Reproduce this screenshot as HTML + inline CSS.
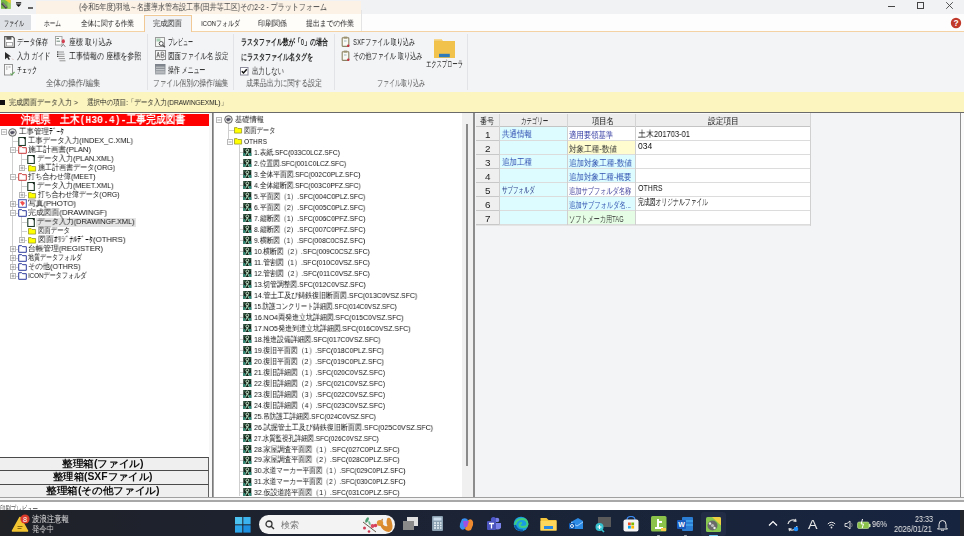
<!DOCTYPE html>
<html><head><meta charset="utf-8">
<style>
*{margin:0;padding:0;box-sizing:border-box}
html,body{width:964px;height:536px;overflow:hidden;background:#f3f4f6;font-family:"Liberation Sans",sans-serif;color:#222}
.a{position:absolute;display:block}
.t{position:absolute;display:block;white-space:nowrap;font-style:normal;transform-origin:0 50%;font-weight:500;will-change:transform}
.clip{position:absolute;overflow:hidden}
</style></head><body>
<div class="a" style="left:0px;top:0px;width:964px;height:14px;background:#f1f2f4;"></div>
<div class="a" style="left:36px;top:1px;width:325px;height:13px;background:#fcf2e6;"></div>
<svg class="a" style="left:0px;top:0px" width="12" height="11" viewBox="0 0 12 11"><rect x="1" y="0" width="9.6" height="8.8" fill="#78b848"/><rect x="7.5" y="0" width="3.1" height="8.8" fill="#9ad060"/><path d="M5 0 h5.6 v3.5z" fill="#f2cc30"/><path d="M2 3.2 L6.8 8.2" stroke="#4a4a4a" stroke-width="2.6"/><path d="M2.8 3.2 L6.6 7.2" stroke="#c8c8c8" stroke-width="0.7"/></svg>
<svg class="a" style="left:15px;top:1px" width="8" height="7" viewBox="0 0 8 7"><rect x="1" y="1.2" width="5.2" height="1.3" fill="#111"/><path d="M1 3.3 L6.2 3.3 L3.6 6 Z" fill="#111"/></svg>
<div class="a" style="left:28px;top:7px;width:5px;height:1.5px;background:#666;"></div>
<i class="t" style="left:79px;top:2.10px;width:248.0px;font-size:9px;line-height:11px;height:11px;color:#4a4a4a;transform:scaleX(0.7823)">(令和5年度)羽地～名護導水管布設工事(田井等工区)その2-2 - プラットフォーム</i>
<div class="a" style="left:888px;top:6px;width:7px;height:1px;background:#444;"></div>
<div class="a" style="left:917px;top:2px;width:7px;height:7px;background:transparent;border:1px solid #444"></div>
<svg class="a" style="left:945px;top:1px" width="9" height="9" viewBox="0 0 9 9"><path d="M1.2 1.2 L7.8 7.8 M7.8 1.2 L1.2 7.8" stroke="#444" stroke-width="0.9"/></svg>
<div class="a" style="left:0px;top:14px;width:964px;height:17px;background:#fdfdfd;"></div>
<div class="a" style="left:36px;top:14px;width:325px;height:17px;background:#fffdfa;"></div>
<div class="a" style="left:0px;top:15px;width:31px;height:15px;background:#dde0e4;"></div>
<div class="a" style="left:361px;top:10px;width:1px;height:21px;background:#e4e4e4;"></div>
<div class="a" style="left:0px;top:31px;width:964px;height:1px;background:#f4d2a4;"></div>
<div class="a" style="left:144px;top:15px;width:48px;height:17px;background:#f3f4f6;border:1px solid #f0c995;border-bottom:none"></div>
<i class="t" style="left:4px;top:19.20px;width:20.0px;font-size:8px;line-height:10px;height:10px;color:#1a1a1a;transform:scaleX(0.625)">ファイル</i>
<i class="t" style="left:44px;top:19.20px;width:17.0px;font-size:8px;line-height:10px;height:10px;color:#1a1a1a;transform:scaleX(0.7083)">ホーム</i>
<i class="t" style="left:81px;top:19.20px;width:53.0px;font-size:8px;line-height:10px;height:10px;color:#1a1a1a;transform:scaleX(0.8281)">全体に関する作業</i>
<i class="t" style="left:153px;top:19.20px;width:29.0px;font-size:8px;line-height:10px;height:10px;color:#1a1a1a;transform:scaleX(0.9063)">完成図面</i>
<i class="t" style="left:201px;top:19.20px;width:39.0px;font-size:8px;line-height:10px;height:10px;color:#1a1a1a;transform:scaleX(0.75)">ICONフォルダ</i>
<i class="t" style="left:258px;top:19.20px;width:29.0px;font-size:8px;line-height:10px;height:10px;color:#1a1a1a;transform:scaleX(0.9063)">印刷関係</i>
<i class="t" style="left:306px;top:19.20px;width:48.0px;font-size:8px;line-height:10px;height:10px;color:#1a1a1a;transform:scaleX(0.8571)">提出までの作業</i>
<svg class="a" style="left:950px;top:17px" width="12" height="12" viewBox="0 0 12 12"><circle cx="6" cy="6" r="5.2" fill="#c0392b"/><text x="6" y="9.2" font-size="8.5" font-weight="bold" text-anchor="middle" fill="#fff" font-family="Liberation Sans">?</text></svg>
<div class="a" style="left:0px;top:32px;width:964px;height:60px;background:#f3f4f6;"></div>
<div class="a" style="left:147px;top:34px;width:1px;height:56px;background:#e2e3e6;"></div>
<div class="a" style="left:233px;top:34px;width:1px;height:56px;background:#e2e3e6;"></div>
<div class="a" style="left:334px;top:34px;width:1px;height:56px;background:#e2e3e6;"></div>
<div class="a" style="left:467px;top:34px;width:1px;height:56px;background:#e2e3e6;"></div>
<svg class="a" style="left:4px;top:36px" width="11" height="12" viewBox="0 0 11 12"><path d="M0.7 0.7h8l1.6 1.6v9h-9.6z" fill="#fff" stroke="#5a5a5a" stroke-width="1.2"/><rect x="2.4" y="0.7" width="5" height="3" fill="#5a5a5a"/><rect x="2.4" y="6.5" width="6" height="3.5" fill="#fff" stroke="#8a8a8a" stroke-width="0.7"/></svg>
<i class="t" style="left:17px;top:36.50px;width:31.0px;font-size:9px;line-height:11px;height:11px;color:#1a1a1a;transform:scaleX(0.6889)">データ保存</i>
<svg class="a" style="left:55px;top:36px" width="12" height="12" viewBox="0 0 12 12"><rect x="0.5" y="0.5" width="6.5" height="8.5" fill="#fafafa" stroke="#a0a0a0" stroke-width="0.9"/><path d="M1.5 2.5h2.5M1.5 5.2h3.5" stroke="#5a7a6a" stroke-width="0.9"/><ellipse cx="8.3" cy="5.3" rx="1.6" ry="2.1" fill="#d04050"/><path d="M6.3 10.8 L8.3 8.3 L10.3 10.8" stroke="#808080" stroke-width="1" fill="none"/></svg>
<i class="t" style="left:69px;top:36.50px;width:43.0px;font-size:9px;line-height:11px;height:11px;color:#1a1a1a;transform:scaleX(0.7609)">座標 取り込み</i>
<svg class="a" style="left:4px;top:51px" width="10" height="10" viewBox="0 0 10 10"><path d="M1 1 L1 8.5 L3 6.5 L4.8 9 L6 8.3 L4.4 5.8 L7.2 5.6 Z" fill="#2a2a2a"/><path d="M8 7.5 L9.5 9" stroke="#c8a0a0" stroke-width="0.7"/></svg>
<i class="t" style="left:17px;top:50.50px;width:33.0px;font-size:9px;line-height:11px;height:11px;color:#1a1a1a;transform:scaleX(0.6945)">入力 ガイド</i>
<svg class="a" style="left:57px;top:51px" width="10" height="12" viewBox="0 0 10 12"><path d="M0 1h7M0 3.2h7.5M0 5.4h7.5M1.5 7.6h6.5M2.5 9.8h6" stroke="#8a8a8a" stroke-width="0.9"/><path d="M0 1h1.2M0 3.2h1.2M0 5.4h1.2" stroke="#333" stroke-width="1.1"/></svg>
<i class="t" style="left:69px;top:50.50px;width:72.0px;font-size:9px;line-height:11px;height:11px;color:#1a1a1a;transform:scaleX(0.7782)">工事情報の 座標を参照</i>
<svg class="a" style="left:4px;top:64px" width="11" height="12" viewBox="0 0 11 12"><rect x="0.5" y="0.5" width="8" height="10.5" fill="#fafafa" stroke="#888" stroke-width="0.9"/><path d="M2 3h1.5M4.5 3h2M2 5h1.5" stroke="#777" stroke-width="0.7"/><path d="M6.5 9.5 L7.8 10.8 L10.5 8" stroke="#6aa860" stroke-width="1.1" fill="none"/></svg>
<i class="t" style="left:17px;top:64.50px;width:20.0px;font-size:9px;line-height:11px;height:11px;color:#1a1a1a;transform:scaleX(0.5556)">チェック</i>
<i class="t" style="left:46px;top:78.00px;width:54.0px;font-size:9px;line-height:11px;height:11px;color:#555;transform:scaleX(0.8242)">全体の操作/編集</i>
<svg class="a" style="left:155px;top:37px" width="11" height="11" viewBox="0 0 11 11"><rect x="0.5" y="0.5" width="9" height="9" fill="#f4f6f4" stroke="#9a9a9a" stroke-width="1"/><rect x="1.5" y="1.5" width="4" height="3" fill="#a8d0b4"/><circle cx="6.2" cy="6.5" r="2" fill="#fff" stroke="#555" stroke-width="1"/><path d="M7.6 8 L10 10.3" stroke="#555" stroke-width="1.3"/></svg>
<i class="t" style="left:168px;top:36.50px;width:25.0px;font-size:9px;line-height:11px;height:11px;color:#1a1a1a;transform:scaleX(0.5556)">プレビュー</i>
<svg class="a" style="left:155px;top:50px" width="11" height="11" viewBox="0 0 11 11"><rect x="0.5" y="0.5" width="10" height="9" fill="#f6f6f6" stroke="#8a8a8a" stroke-width="1"/><path d="M1.8 7.5 L3.2 2.2 L4.6 7.5 M2.4 5.6h1.6" stroke="#666" stroke-width="0.9" fill="none"/><path d="M6.2 2.2v5.3h1.6q1.4 0 1.4-1.4q0-1.2-1.4-1.2h-1.6h1.4q1.2 0 1.2-1.3q0-1.4-1.2-1.4z" stroke="#666" stroke-width="0.8" fill="none"/><circle cx="7.5" cy="9.8" r="0.9" fill="#888"/></svg>
<i class="t" style="left:168px;top:50.50px;width:60.0px;font-size:9px;line-height:11px;height:11px;color:#1a1a1a;transform:scaleX(0.7184)">図面ファイル名 設定</i>
<svg class="a" style="left:155px;top:64px" width="11" height="11" viewBox="0 0 11 11"><defs><linearGradient id="mg" x1="0" y1="0" x2="0" y2="1"><stop offset="0" stop-color="#7a8088"/><stop offset="1" stop-color="#a8acb0"/></linearGradient></defs><rect x="0" y="0" width="10.5" height="10.5" fill="url(#mg)"/><path d="M1 3.2h8.5M1 5.6h8.5M1 8h8.5" stroke="#d8dadc" stroke-width="0.8"/></svg>
<i class="t" style="left:168px;top:64.50px;width:37.0px;font-size:9px;line-height:11px;height:11px;color:#1a1a1a;transform:scaleX(0.6547)">操作 メニュー</i>
<i class="t" style="left:153px;top:77.80px;width:75.0px;font-size:9px;line-height:11px;height:11px;color:#555;transform:scaleX(0.7388)">ファイル個別の操作/編集</i>
<i class="t" style="left:241px;top:36.70px;width:87.0px;font-size:9px;line-height:11px;height:11px;color:#222;font-weight:bold;transform:scaleX(0.664)">ラスタファイル数が「0」の場合</i>
<i class="t" style="left:241px;top:51.50px;width:72.0px;font-size:9px;line-height:11px;height:11px;color:#222;font-weight:bold;transform:scaleX(0.6667)">にラスタファイル名タグを</i>
<svg class="a" style="left:240px;top:67px" width="9" height="9" viewBox="0 0 9 9"><rect x="0.5" y="0.5" width="7.5" height="7.5" fill="#fff" stroke="#8a8a9a" stroke-width="1"/><path d="M1.8 4.2 L3.5 6 L6.8 2.2" stroke="#111" stroke-width="1.5" fill="none"/></svg>
<i class="t" style="left:252px;top:66.30px;width:32.0px;font-size:9px;line-height:11px;height:11px;color:#1a1a1a;transform:scaleX(0.7111)">出力しない</i>
<i class="t" style="left:246px;top:77.90px;width:76.0px;font-size:9px;line-height:11px;height:11px;color:#555;transform:scaleX(0.7677)">成果品出力に関する設定</i>
<svg class="a" style="left:341px;top:36px" width="10" height="12" viewBox="0 0 10 12"><rect x="1.2" y="1.8" width="6.6" height="8.6" rx="0.6" fill="#f8f8f4" stroke="#8a8262" stroke-width="1.1"/><rect x="2.8" y="0.6" width="3.4" height="2" fill="#9a9270"/><path d="M3 5h2.5" stroke="#7a9aa0" stroke-width="0.7"/><circle cx="7.3" cy="9.8" r="1.2" fill="#c83040"/></svg>
<svg class="a" style="left:341px;top:50px" width="10" height="12" viewBox="0 0 10 12"><rect x="1.2" y="1.8" width="6.6" height="8.6" rx="0.6" fill="#f8f8f4" stroke="#8a8262" stroke-width="1.1"/><rect x="2.8" y="0.6" width="3.4" height="2" fill="#9a9270"/><path d="M3 5h2.5" stroke="#7a9aa0" stroke-width="0.7"/><circle cx="7.3" cy="9.8" r="1.2" fill="#c83040"/></svg>
<i class="t" style="left:353px;top:36.90px;width:62.0px;font-size:9px;line-height:11px;height:11px;color:#1a1a1a;transform:scaleX(0.6738)">SXFファイル 取り込み</i>
<i class="t" style="left:353px;top:50.50px;width:69.0px;font-size:9px;line-height:11px;height:11px;color:#1a1a1a;transform:scaleX(0.6797)">その他ファイル 取り込み</i>
<svg class="a" style="left:434px;top:39px" width="21" height="19" viewBox="0 0 21 19"><path d="M0 0.4h7.5l1.5 1.6h12v17h-21z" fill="#f0c04a"/><rect x="0" y="0" width="8" height="1.6" fill="#f6d890"/><rect x="0" y="2.4" width="21" height="16.6" fill="#f2c34c"/><rect x="5" y="14.8" width="10.8" height="3.4" fill="#2f7ab8"/></svg>
<i class="t" style="left:426px;top:59.20px;width:37.0px;font-size:9px;line-height:11px;height:11px;color:#1a1a1a;transform:scaleX(0.5873)">エクスプローラ</i>
<i class="t" style="left:377px;top:78.00px;width:48.0px;font-size:9px;line-height:11px;height:11px;color:#555;transform:scaleX(0.6667)">ファイル取り込み</i>
<div class="a" style="left:0px;top:92px;width:964px;height:20px;background:#fcf5c0;"></div>
<div class="a" style="left:0px;top:112px;width:964px;height:1px;background:#6a6a6a;"></div>
<div class="a" style="left:0px;top:113px;width:964px;height:1px;background:#a8a8a8;"></div>
<div class="a" style="left:0px;top:100px;width:5px;height:5px;background:#111;"></div>
<i class="t" style="left:9px;top:97.60px;width:69.0px;font-size:8px;line-height:10px;height:10px;color:#1a1a1a;transform:scaleX(0.8745)">完成図面データ入力 &gt;</i>
<i class="t" style="left:87px;top:97.60px;width:140.0px;font-size:8px;line-height:10px;height:10px;color:#1a1a1a;transform:scaleX(0.8154)">選択中の項目:「データ入力(DRAWINGEXML)」</i>
<div class="a" style="left:0px;top:113px;width:209px;height:387px;background:#fff;"></div>
<div class="a" style="left:209px;top:113px;width:3px;height:387px;background:#f7f7f7;"></div>
<div class="a" style="left:0px;top:114px;width:209px;height:12px;background:#ff0000;"></div>
<i class="t" style="left:21px;top:114.10px;width:164.0px;font-size:11px;line-height:13px;height:13px;color:#fff;font-family:'Liberation Mono',monospace;font-weight:bold;transform:scaleX(0.8874)">沖縄県　土木(H30.4)-工事完成図書</i>
<div class="a" style="left:12px;top:136px;width:1px;height:140px;background:#cfcfcf;"></div>
<div class="a" style="left:21px;top:153px;width:1px;height:15px;background:#cfcfcf;"></div>
<div class="a" style="left:21px;top:180px;width:1px;height:15px;background:#cfcfcf;"></div>
<div class="a" style="left:21px;top:216px;width:1px;height:24px;background:#cfcfcf;"></div>
<svg class="a" style="left:1px;top:129px" width="6" height="6" viewBox="0 0 6 6"><rect x="0.5" y="0.5" width="5" height="5" fill="#fff" stroke="#b8b8b8" stroke-width="1"/><path d="M1.5 3h3" stroke="#8a8a8a" stroke-width="0.8"/></svg>
<svg class="a" style="left:8px;top:128px" width="9" height="9" viewBox="0 0 9 9"><circle cx="4.5" cy="4.5" r="3.8" fill="#ddd" stroke="#666" stroke-width="1"/><path d="M2 4 Q4.5 2 7 4 Q5 7 3 6" fill="#556"/></svg>
<i class="t" style="left:19px;top:127.10px;width:45.0px;font-size:8px;line-height:10px;height:10px;color:#111;transform:scaleX(0.9375)">工事管理ﾃﾞｰﾀ</i>
<div class="a" style="left:12px;top:141px;width:6px;height:1px;background:#cfcfcf;"></div>
<svg class="a" style="left:18px;top:137px" width="8" height="9" viewBox="0 0 8 9"><rect x="0.8" y="0.5" width="6.5" height="8" fill="#fff" stroke="#1f3d2a" stroke-width="1.1"/><path d="M5 0.5h2.3v2.3z" fill="#111"/></svg>
<i class="t" style="left:28px;top:136.09px;width:105.0px;font-size:8px;line-height:10px;height:10px;color:#111;transform:scaleX(0.9155)">工事データ入力(INDEX_C.XML)</i>
<div class="a" style="left:12px;top:150px;width:6px;height:1px;background:#cfcfcf;"></div>
<svg class="a" style="left:10px;top:147px" width="6" height="6" viewBox="0 0 6 6"><rect x="0.5" y="0.5" width="5" height="5" fill="#fff" stroke="#b8b8b8" stroke-width="1"/><path d="M1.5 3h3" stroke="#8a8a8a" stroke-width="0.8"/></svg>
<svg class="a" style="left:18px;top:145px" width="9" height="9" viewBox="0 0 9 9"><path d="M0.7 1.7h3l1 1h3.6v5.6h-7.6z" fill="#fff" stroke="#c83838" stroke-width="1"/></svg>
<i class="t" style="left:28px;top:145.08px;width:63.0px;font-size:8px;line-height:10px;height:10px;color:#111;transform:scaleX(0.9512)">施工計画書(PLAN)</i>
<div class="a" style="left:21px;top:159px;width:6px;height:1px;background:#cfcfcf;"></div>
<svg class="a" style="left:27px;top:155px" width="8" height="9" viewBox="0 0 8 9"><rect x="0.8" y="0.5" width="6.5" height="8" fill="#fff" stroke="#1f3d2a" stroke-width="1.1"/><path d="M5 0.5h2.3v2.3z" fill="#111"/></svg>
<i class="t" style="left:37px;top:154.07px;width:76.5px;font-size:8px;line-height:10px;height:10px;color:#111;transform:scaleX(0.901)">データ入力(PLAN.XML)</i>
<div class="a" style="left:21px;top:168px;width:6px;height:1px;background:#cfcfcf;"></div>
<svg class="a" style="left:19px;top:165px" width="6" height="6" viewBox="0 0 6 6"><rect x="0.5" y="0.5" width="5" height="5" fill="#fff" stroke="#b8b8b8" stroke-width="1"/><path d="M1.5 3h3" stroke="#8a8a8a" stroke-width="0.8"/><path d="M3 1.5v3" stroke="#8a8a8a" stroke-width="0.8"/></svg>
<svg class="a" style="left:28px;top:163px" width="9" height="9" viewBox="0 0 9 9"><path d="M0.5 2.6h2.6l0.9 0.9h3.6v4.6h-7.1z" fill="#ffff00" stroke="#8a8a20" stroke-width="0.7"/></svg>
<i class="t" style="left:38px;top:163.06px;width:77.0px;font-size:8px;line-height:10px;height:10px;color:#111;transform:scaleX(0.8794)">施工計画書データ(ORG)</i>
<div class="a" style="left:12px;top:177px;width:6px;height:1px;background:#cfcfcf;"></div>
<svg class="a" style="left:10px;top:174px" width="6" height="6" viewBox="0 0 6 6"><rect x="0.5" y="0.5" width="5" height="5" fill="#fff" stroke="#b8b8b8" stroke-width="1"/><path d="M1.5 3h3" stroke="#8a8a8a" stroke-width="0.8"/></svg>
<svg class="a" style="left:18px;top:172px" width="9" height="9" viewBox="0 0 9 9"><path d="M0.7 1.7h3l1 1h3.6v5.6h-7.6z" fill="#fff" stroke="#c83838" stroke-width="1"/></svg>
<i class="t" style="left:28px;top:172.05px;width:67.5px;font-size:8px;line-height:10px;height:10px;color:#111;transform:scaleX(0.8933)">打ち合わせ簿(MEET)</i>
<div class="a" style="left:21px;top:186px;width:6px;height:1px;background:#cfcfcf;"></div>
<svg class="a" style="left:27px;top:182px" width="8" height="9" viewBox="0 0 8 9"><rect x="0.8" y="0.5" width="6.5" height="8" fill="#fff" stroke="#1f3d2a" stroke-width="1.1"/><path d="M5 0.5h2.3v2.3z" fill="#111"/></svg>
<i class="t" style="left:37px;top:181.04px;width:76.5px;font-size:8px;line-height:10px;height:10px;color:#111;transform:scaleX(0.8964)">データ入力(MEET.XML)</i>
<div class="a" style="left:21px;top:195px;width:6px;height:1px;background:#cfcfcf;"></div>
<svg class="a" style="left:19px;top:192px" width="6" height="6" viewBox="0 0 6 6"><rect x="0.5" y="0.5" width="5" height="5" fill="#fff" stroke="#b8b8b8" stroke-width="1"/><path d="M1.5 3h3" stroke="#8a8a8a" stroke-width="0.8"/><path d="M3 1.5v3" stroke="#8a8a8a" stroke-width="0.8"/></svg>
<svg class="a" style="left:28px;top:190px" width="9" height="9" viewBox="0 0 9 9"><path d="M0.5 2.6h2.6l0.9 0.9h3.6v4.6h-7.1z" fill="#ffff00" stroke="#8a8a20" stroke-width="0.7"/></svg>
<i class="t" style="left:38px;top:190.03px;width:81.5px;font-size:8px;line-height:10px;height:10px;color:#111;transform:scaleX(0.8528)">打ち合わせ簿データ(ORG)</i>
<div class="a" style="left:12px;top:204px;width:6px;height:1px;background:#cfcfcf;"></div>
<svg class="a" style="left:10px;top:201px" width="6" height="6" viewBox="0 0 6 6"><rect x="0.5" y="0.5" width="5" height="5" fill="#fff" stroke="#b8b8b8" stroke-width="1"/><path d="M1.5 3h3" stroke="#8a8a8a" stroke-width="0.8"/><path d="M3 1.5v3" stroke="#8a8a8a" stroke-width="0.8"/></svg>
<svg class="a" style="left:18px;top:199px" width="9" height="9" viewBox="0 0 9 9"><rect x="0.7" y="0.7" width="7.6" height="7.6" fill="#fff" stroke="#4050b0" stroke-width="1"/><path d="M2 3 L4.5 2 L7 4 L4.5 7 Z" fill="#f05050"/></svg>
<i class="t" style="left:28px;top:199.02px;width:48.0px;font-size:8px;line-height:10px;height:10px;color:#111;transform:scaleX(0.9669)">写真(PHOTO)</i>
<div class="a" style="left:12px;top:213px;width:6px;height:1px;background:#cfcfcf;"></div>
<svg class="a" style="left:10px;top:210px" width="6" height="6" viewBox="0 0 6 6"><rect x="0.5" y="0.5" width="5" height="5" fill="#fff" stroke="#b8b8b8" stroke-width="1"/><path d="M1.5 3h3" stroke="#8a8a8a" stroke-width="0.8"/></svg>
<svg class="a" style="left:18px;top:208px" width="9" height="9" viewBox="0 0 9 9"><path d="M0.7 1.7h3l1 1h3.6v5.6h-7.6z" fill="#fff" stroke="#2c3a9c" stroke-width="1"/></svg>
<i class="t" style="left:28px;top:208.01px;width:79.0px;font-size:8px;line-height:10px;height:10px;color:#111;transform:scaleX(0.9802)">完成図面(DRAWINGF)</i>
<div class="a" style="left:21px;top:222px;width:6px;height:1px;background:#cfcfcf;"></div>
<div class="a" style="left:36px;top:218px;width:100px;height:9px;background:#e4e4e4;"></div>
<svg class="a" style="left:27px;top:218px" width="8" height="9" viewBox="0 0 8 9"><rect x="0.8" y="0.5" width="6.5" height="8" fill="#fff" stroke="#1f3d2a" stroke-width="1.1"/><path d="M5 0.5h2.3v2.3z" fill="#111"/></svg>
<i class="t" style="left:37px;top:217.00px;width:97.5px;font-size:8px;line-height:10px;height:10px;color:#111;transform:scaleX(0.9166)">データ入力(DRAWINGF.XML)</i>
<div class="a" style="left:21px;top:231px;width:6px;height:1px;background:#cfcfcf;"></div>
<svg class="a" style="left:28px;top:226px" width="9" height="9" viewBox="0 0 9 9"><path d="M0.5 2.6h2.6l0.9 0.9h3.6v4.6h-7.1z" fill="#ffff00" stroke="#8a8a20" stroke-width="0.7"/></svg>
<i class="t" style="left:38px;top:225.99px;width:32.0px;font-size:8px;line-height:10px;height:10px;color:#111;transform:scaleX(0.8)">図面データ</i>
<div class="a" style="left:21px;top:240px;width:6px;height:1px;background:#cfcfcf;"></div>
<svg class="a" style="left:19px;top:237px" width="6" height="6" viewBox="0 0 6 6"><rect x="0.5" y="0.5" width="5" height="5" fill="#fff" stroke="#b8b8b8" stroke-width="1"/><path d="M1.5 3h3" stroke="#8a8a8a" stroke-width="0.8"/><path d="M3 1.5v3" stroke="#8a8a8a" stroke-width="0.8"/></svg>
<svg class="a" style="left:28px;top:235px" width="9" height="9" viewBox="0 0 9 9"><path d="M0.5 2.6h2.6l0.9 0.9h3.6v4.6h-7.1z" fill="#ffff00" stroke="#8a8a20" stroke-width="0.7"/></svg>
<i class="t" style="left:38px;top:234.98px;width:87.5px;font-size:8px;line-height:10px;height:10px;color:#111;transform:scaleX(0.9795)">図面ｵﾘｼﾞﾅﾙﾃﾞｰﾀ(OTHRS)</i>
<div class="a" style="left:12px;top:249px;width:6px;height:1px;background:#cfcfcf;"></div>
<svg class="a" style="left:10px;top:246px" width="6" height="6" viewBox="0 0 6 6"><rect x="0.5" y="0.5" width="5" height="5" fill="#fff" stroke="#b8b8b8" stroke-width="1"/><path d="M1.5 3h3" stroke="#8a8a8a" stroke-width="0.8"/><path d="M3 1.5v3" stroke="#8a8a8a" stroke-width="0.8"/></svg>
<svg class="a" style="left:18px;top:244px" width="9" height="9" viewBox="0 0 9 9"><path d="M0.7 1.7h3l1 1h3.6v5.6h-7.6z" fill="#fff" stroke="#2c3a9c" stroke-width="1"/></svg>
<i class="t" style="left:28px;top:243.97px;width:75.0px;font-size:8px;line-height:10px;height:10px;color:#111;transform:scaleX(0.9587)">台帳管理(REGISTER)</i>
<div class="a" style="left:12px;top:258px;width:6px;height:1px;background:#cfcfcf;"></div>
<svg class="a" style="left:10px;top:255px" width="6" height="6" viewBox="0 0 6 6"><rect x="0.5" y="0.5" width="5" height="5" fill="#fff" stroke="#b8b8b8" stroke-width="1"/><path d="M1.5 3h3" stroke="#8a8a8a" stroke-width="0.8"/><path d="M3 1.5v3" stroke="#8a8a8a" stroke-width="0.8"/></svg>
<svg class="a" style="left:18px;top:253px" width="9" height="9" viewBox="0 0 9 9"><path d="M0.7 1.7h3l1 1h3.6v5.6h-7.6z" fill="#fff" stroke="#2c3a9c" stroke-width="1"/></svg>
<i class="t" style="left:28px;top:252.96px;width:54.0px;font-size:8px;line-height:10px;height:10px;color:#111;transform:scaleX(0.75)">地質データフォルダ</i>
<div class="a" style="left:12px;top:267px;width:6px;height:1px;background:#cfcfcf;"></div>
<svg class="a" style="left:10px;top:264px" width="6" height="6" viewBox="0 0 6 6"><rect x="0.5" y="0.5" width="5" height="5" fill="#fff" stroke="#b8b8b8" stroke-width="1"/><path d="M1.5 3h3" stroke="#8a8a8a" stroke-width="0.8"/><path d="M3 1.5v3" stroke="#8a8a8a" stroke-width="0.8"/></svg>
<svg class="a" style="left:18px;top:262px" width="9" height="9" viewBox="0 0 9 9"><path d="M0.7 1.7h3l1 1h3.6v5.6h-7.6z" fill="#fff" stroke="#2c3a9c" stroke-width="1"/></svg>
<i class="t" style="left:28px;top:261.95px;width:52.5px;font-size:8px;line-height:10px;height:10px;color:#111;transform:scaleX(0.9158)">その他(OTHRS)</i>
<div class="a" style="left:12px;top:276px;width:6px;height:1px;background:#cfcfcf;"></div>
<svg class="a" style="left:10px;top:273px" width="6" height="6" viewBox="0 0 6 6"><rect x="0.5" y="0.5" width="5" height="5" fill="#fff" stroke="#b8b8b8" stroke-width="1"/><path d="M1.5 3h3" stroke="#8a8a8a" stroke-width="0.8"/><path d="M3 1.5v3" stroke="#8a8a8a" stroke-width="0.8"/></svg>
<svg class="a" style="left:18px;top:271px" width="9" height="9" viewBox="0 0 9 9"><path d="M0.7 1.7h3l1 1h3.6v5.6h-7.6z" fill="#fff" stroke="#2c3a9c" stroke-width="1"/></svg>
<i class="t" style="left:28px;top:270.94px;width:58.5px;font-size:8px;line-height:10px;height:10px;color:#111;transform:scaleX(0.7697)">ICONデータフォルダ</i>
<div class="a" style="left:0;top:457px;width:209px;height:14px;background:#efefef;border-top:1px solid #4a4a4a;border-bottom:1px solid #4a4a4a;border-right:1px solid #606060"></div>
<i class="t" style="left:62px;top:458.00px;width:81.5px;font-size:10px;line-height:12px;height:12px;color:#111;font-family:'Liberation Sans',sans-serif;font-weight:bold;transform:scaleX(1.063)">整理箱(ファイル)</i>
<div class="a" style="left:0;top:470px;width:209px;height:14.5px;background:#efefef;border-top:1px solid #4a4a4a;border-bottom:1px solid #4a4a4a;border-right:1px solid #606060"></div>
<i class="t" style="left:52.6px;top:471.25px;width:99.4px;font-size:10px;line-height:12px;height:12px;color:#111;font-family:'Liberation Sans',sans-serif;font-weight:bold;transform:scaleX(1.0342)">整理箱(SXFファイル)</i>
<div class="a" style="left:0;top:483.5px;width:209px;height:14.5px;background:#efefef;border-top:1px solid #4a4a4a;border-bottom:1px solid #4a4a4a;border-right:1px solid #606060"></div>
<i class="t" style="left:45.5px;top:484.75px;width:113.5px;font-size:10px;line-height:12px;height:12px;color:#111;font-family:'Liberation Sans',sans-serif;font-weight:bold;transform:scaleX(1.064)">整理箱(その他ファイル)</i>
<div class="a" style="left:212px;top:113px;width:262px;height:385px;background:#fff;border-left:1px solid #7a7a7a"></div>
<div class="a" style="left:213px;top:113px;width:1px;height:385px;background:#a4a4a4;"></div>
<div class="a" style="left:462px;top:113px;width:11px;height:385px;background:#f0f0f0;"></div>
<div class="a" style="left:466px;top:124px;width:2px;height:342px;background:#8a8a8a;"></div>
<div class="a" style="left:473px;top:113px;width:2px;height:385px;background:#8c8c8c;"></div>
<div class="clip" style="left:214px;top:113px;width:248px;height:384px">
<div class="a" style="left:14px;top:9.5px;width:1px;height:18.939999999999998px;background:#cfcfcf;"></div>
<div class="a" style="left:14px;top:17px;width:6px;height:1px;background:#cfcfcf;"></div>
<div class="a" style="left:14px;top:28px;width:5px;height:1px;background:#cfcfcf;"></div>
<div class="a" style="left:24.5px;top:32.44px;width:1px;height:351.04px;background:#cfcfcf;"></div>
<svg class="a" style="left:2px;top:4px" width="6" height="6" viewBox="0 0 6 6"><rect x="0.5" y="0.5" width="5" height="5" fill="#fff" stroke="#b8b8b8" stroke-width="1"/><path d="M1.5 3h3" stroke="#8a8a8a" stroke-width="0.8"/></svg>
<svg class="a" style="left:10px;top:2px" width="9" height="9" viewBox="0 0 9 9"><circle cx="4.5" cy="4.5" r="3.8" fill="#ddd" stroke="#666" stroke-width="1"/><path d="M2 4 Q4.5 2 7 4 Q5 7 3 6" fill="#556"/></svg>
<i class="t" style="left:21px;top:1.90px;width:29.0px;font-size:8px;line-height:10px;height:10px;color:#111;transform:scaleX(0.9063)">基礎情報</i>
<svg class="a" style="left:19.5px;top:12px" width="9" height="9" viewBox="0 0 9 9"><path d="M0.5 2.6h2.6l0.9 0.9h3.6v4.6h-7.1z" fill="#ffff00" stroke="#8a8a20" stroke-width="0.7"/></svg>
<i class="t" style="left:30.400000000000006px;top:12.87px;width:31.4px;font-size:8px;line-height:10px;height:10px;color:#111;transform:scaleX(0.785)">図面データ</i>
<svg class="a" style="left:12.5px;top:26px" width="6" height="6" viewBox="0 0 6 6"><rect x="0.5" y="0.5" width="5" height="5" fill="#fff" stroke="#b8b8b8" stroke-width="1"/><path d="M1.5 3h3" stroke="#8a8a8a" stroke-width="0.8"/></svg>
<svg class="a" style="left:19.5px;top:23px" width="9" height="9" viewBox="0 0 9 9"><path d="M0.5 2.6h2.6l0.9 0.9h3.6v4.6h-7.1z" fill="#ffff00" stroke="#8a8a20" stroke-width="0.7"/></svg>
<i class="t" style="left:30.400000000000006px;top:23.84px;width:23.0px;font-size:8px;line-height:10px;height:10px;color:#111;transform:scaleX(0.8214)">OTHRS</i>
<div class="a" style="left:25px;top:39px;width:4px;height:1px;background:#cfcfcf;"></div>
<svg class="a" style="left:29px;top:35px" width="9" height="9" viewBox="0 0 9 9"><rect x="0.3" y="0" width="8" height="8" fill="#14281e"/><path d="M0.3 5 h2 v3 h-2z M6 5h2.3v3H6z" fill="#2e8a78"/><circle cx="4.3" cy="2.3" r="1.4" fill="none" stroke="#d8f0d8" stroke-width="0.9"/><path d="M4.3 3.5 L2.6 7.6 M4.3 3.5 L6 7.6" stroke="#b8e0c0" stroke-width="0.9"/><path d="M0.8 1 h1.5 M6.5 1h1.3" stroke="#4a8a60" stroke-width="1"/></svg>
<i class="t" style="left:40.19999999999999px;top:35.31px;width:85.8px;font-size:8px;line-height:10px;height:10px;color:#111;transform:scaleX(0.8319)">1.表紙.SFC(033C0LCZ.SFC)</i>
<div class="a" style="left:25px;top:50px;width:4px;height:1px;background:#cfcfcf;"></div>
<svg class="a" style="left:29px;top:46px" width="9" height="9" viewBox="0 0 9 9"><rect x="0.3" y="0" width="8" height="8" fill="#14281e"/><path d="M0.3 5 h2 v3 h-2z M6 5h2.3v3H6z" fill="#2e8a78"/><circle cx="4.3" cy="2.3" r="1.4" fill="none" stroke="#d8f0d8" stroke-width="0.9"/><path d="M4.3 3.5 L2.6 7.6 M4.3 3.5 L6 7.6" stroke="#b8e0c0" stroke-width="0.9"/><path d="M0.8 1 h1.5 M6.5 1h1.3" stroke="#4a8a60" stroke-width="1"/></svg>
<i class="t" style="left:40.19999999999999px;top:46.28px;width:92.2px;font-size:8px;line-height:10px;height:10px;color:#111;transform:scaleX(0.8296)">2.位置図.SFC(001C0LCZ.SFC)</i>
<div class="a" style="left:25px;top:61px;width:4px;height:1px;background:#cfcfcf;"></div>
<svg class="a" style="left:29px;top:57px" width="9" height="9" viewBox="0 0 9 9"><rect x="0.3" y="0" width="8" height="8" fill="#14281e"/><path d="M0.3 5 h2 v3 h-2z M6 5h2.3v3H6z" fill="#2e8a78"/><circle cx="4.3" cy="2.3" r="1.4" fill="none" stroke="#d8f0d8" stroke-width="0.9"/><path d="M4.3 3.5 L2.6 7.6 M4.3 3.5 L6 7.6" stroke="#b8e0c0" stroke-width="0.9"/><path d="M0.8 1 h1.5 M6.5 1h1.3" stroke="#4a8a60" stroke-width="1"/></svg>
<i class="t" style="left:40.19999999999999px;top:57.25px;width:106.5px;font-size:8px;line-height:10px;height:10px;color:#111;transform:scaleX(0.8405)">3.全体平面図.SFC(002C0PLZ.SFC)</i>
<div class="a" style="left:25px;top:72px;width:4px;height:1px;background:#cfcfcf;"></div>
<svg class="a" style="left:29px;top:68px" width="9" height="9" viewBox="0 0 9 9"><rect x="0.3" y="0" width="8" height="8" fill="#14281e"/><path d="M0.3 5 h2 v3 h-2z M6 5h2.3v3H6z" fill="#2e8a78"/><circle cx="4.3" cy="2.3" r="1.4" fill="none" stroke="#d8f0d8" stroke-width="0.9"/><path d="M4.3 3.5 L2.6 7.6 M4.3 3.5 L6 7.6" stroke="#b8e0c0" stroke-width="0.9"/><path d="M0.8 1 h1.5 M6.5 1h1.3" stroke="#4a8a60" stroke-width="1"/></svg>
<i class="t" style="left:40.19999999999999px;top:68.22px;width:106.5px;font-size:8px;line-height:10px;height:10px;color:#111;transform:scaleX(0.8377)">4.全体縦断図.SFC(003C0PFZ.SFC)</i>
<div class="a" style="left:25px;top:83px;width:4px;height:1px;background:#cfcfcf;"></div>
<svg class="a" style="left:29px;top:79px" width="9" height="9" viewBox="0 0 9 9"><rect x="0.3" y="0" width="8" height="8" fill="#14281e"/><path d="M0.3 5 h2 v3 h-2z M6 5h2.3v3H6z" fill="#2e8a78"/><circle cx="4.3" cy="2.3" r="1.4" fill="none" stroke="#d8f0d8" stroke-width="0.9"/><path d="M4.3 3.5 L2.6 7.6 M4.3 3.5 L6 7.6" stroke="#b8e0c0" stroke-width="0.9"/><path d="M0.8 1 h1.5 M6.5 1h1.3" stroke="#4a8a60" stroke-width="1"/></svg>
<i class="t" style="left:40.19999999999999px;top:79.19px;width:111.3px;font-size:8px;line-height:10px;height:10px;color:#111;transform:scaleX(0.8487)">5.平面図（1）.SFC(004C0PLZ.SFC)</i>
<div class="a" style="left:25px;top:94px;width:4px;height:1px;background:#cfcfcf;"></div>
<svg class="a" style="left:29px;top:90px" width="9" height="9" viewBox="0 0 9 9"><rect x="0.3" y="0" width="8" height="8" fill="#14281e"/><path d="M0.3 5 h2 v3 h-2z M6 5h2.3v3H6z" fill="#2e8a78"/><circle cx="4.3" cy="2.3" r="1.4" fill="none" stroke="#d8f0d8" stroke-width="0.9"/><path d="M4.3 3.5 L2.6 7.6 M4.3 3.5 L6 7.6" stroke="#b8e0c0" stroke-width="0.9"/><path d="M0.8 1 h1.5 M6.5 1h1.3" stroke="#4a8a60" stroke-width="1"/></svg>
<i class="t" style="left:40.19999999999999px;top:90.16px;width:111.3px;font-size:8px;line-height:10px;height:10px;color:#111;transform:scaleX(0.8487)">6.平面図（2）.SFC(005C0PLZ.SFC)</i>
<div class="a" style="left:25px;top:105px;width:4px;height:1px;background:#cfcfcf;"></div>
<svg class="a" style="left:29px;top:101px" width="9" height="9" viewBox="0 0 9 9"><rect x="0.3" y="0" width="8" height="8" fill="#14281e"/><path d="M0.3 5 h2 v3 h-2z M6 5h2.3v3H6z" fill="#2e8a78"/><circle cx="4.3" cy="2.3" r="1.4" fill="none" stroke="#d8f0d8" stroke-width="0.9"/><path d="M4.3 3.5 L2.6 7.6 M4.3 3.5 L6 7.6" stroke="#b8e0c0" stroke-width="0.9"/><path d="M0.8 1 h1.5 M6.5 1h1.3" stroke="#4a8a60" stroke-width="1"/></svg>
<i class="t" style="left:40.19999999999999px;top:101.13px;width:111.3px;font-size:8px;line-height:10px;height:10px;color:#111;transform:scaleX(0.8459)">7.縦断図（1）.SFC(006C0PFZ.SFC)</i>
<div class="a" style="left:25px;top:116px;width:4px;height:1px;background:#cfcfcf;"></div>
<svg class="a" style="left:29px;top:112px" width="9" height="9" viewBox="0 0 9 9"><rect x="0.3" y="0" width="8" height="8" fill="#14281e"/><path d="M0.3 5 h2 v3 h-2z M6 5h2.3v3H6z" fill="#2e8a78"/><circle cx="4.3" cy="2.3" r="1.4" fill="none" stroke="#d8f0d8" stroke-width="0.9"/><path d="M4.3 3.5 L2.6 7.6 M4.3 3.5 L6 7.6" stroke="#b8e0c0" stroke-width="0.9"/><path d="M0.8 1 h1.5 M6.5 1h1.3" stroke="#4a8a60" stroke-width="1"/></svg>
<i class="t" style="left:40.19999999999999px;top:112.10px;width:111.3px;font-size:8px;line-height:10px;height:10px;color:#111;transform:scaleX(0.8459)">8.縦断図（2）.SFC(007C0PFZ.SFC)</i>
<div class="a" style="left:25px;top:127px;width:4px;height:1px;background:#cfcfcf;"></div>
<svg class="a" style="left:29px;top:123px" width="9" height="9" viewBox="0 0 9 9"><rect x="0.3" y="0" width="8" height="8" fill="#14281e"/><path d="M0.3 5 h2 v3 h-2z M6 5h2.3v3H6z" fill="#2e8a78"/><circle cx="4.3" cy="2.3" r="1.4" fill="none" stroke="#d8f0d8" stroke-width="0.9"/><path d="M4.3 3.5 L2.6 7.6 M4.3 3.5 L6 7.6" stroke="#b8e0c0" stroke-width="0.9"/><path d="M0.8 1 h1.5 M6.5 1h1.3" stroke="#4a8a60" stroke-width="1"/></svg>
<i class="t" style="left:40.19999999999999px;top:123.07px;width:111.3px;font-size:8px;line-height:10px;height:10px;color:#111;transform:scaleX(0.8402)">9.横断図（1）.SFC(008C0CSZ.SFC)</i>
<div class="a" style="left:25px;top:138px;width:4px;height:1px;background:#cfcfcf;"></div>
<svg class="a" style="left:29px;top:134px" width="9" height="9" viewBox="0 0 9 9"><rect x="0.3" y="0" width="8" height="8" fill="#14281e"/><path d="M0.3 5 h2 v3 h-2z M6 5h2.3v3H6z" fill="#2e8a78"/><circle cx="4.3" cy="2.3" r="1.4" fill="none" stroke="#d8f0d8" stroke-width="0.9"/><path d="M4.3 3.5 L2.6 7.6 M4.3 3.5 L6 7.6" stroke="#b8e0c0" stroke-width="0.9"/><path d="M0.8 1 h1.5 M6.5 1h1.3" stroke="#4a8a60" stroke-width="1"/></svg>
<i class="t" style="left:40.19999999999999px;top:134.04px;width:115.8px;font-size:8px;line-height:10px;height:10px;color:#111;transform:scaleX(0.8457)">10.横断図（2）.SFC(009C0CSZ.SFC)</i>
<div class="a" style="left:25px;top:149px;width:4px;height:1px;background:#cfcfcf;"></div>
<svg class="a" style="left:29px;top:145px" width="9" height="9" viewBox="0 0 9 9"><rect x="0.3" y="0" width="8" height="8" fill="#14281e"/><path d="M0.3 5 h2 v3 h-2z M6 5h2.3v3H6z" fill="#2e8a78"/><circle cx="4.3" cy="2.3" r="1.4" fill="none" stroke="#d8f0d8" stroke-width="0.9"/><path d="M4.3 3.5 L2.6 7.6 M4.3 3.5 L6 7.6" stroke="#b8e0c0" stroke-width="0.9"/><path d="M0.8 1 h1.5 M6.5 1h1.3" stroke="#4a8a60" stroke-width="1"/></svg>
<i class="t" style="left:40.19999999999999px;top:145.01px;width:115.8px;font-size:8px;line-height:10px;height:10px;color:#111;transform:scaleX(0.8522)">11.管割図（1）.SFC(010C0VSZ.SFC)</i>
<div class="a" style="left:25px;top:160px;width:4px;height:1px;background:#cfcfcf;"></div>
<svg class="a" style="left:29px;top:156px" width="9" height="9" viewBox="0 0 9 9"><rect x="0.3" y="0" width="8" height="8" fill="#14281e"/><path d="M0.3 5 h2 v3 h-2z M6 5h2.3v3H6z" fill="#2e8a78"/><circle cx="4.3" cy="2.3" r="1.4" fill="none" stroke="#d8f0d8" stroke-width="0.9"/><path d="M4.3 3.5 L2.6 7.6 M4.3 3.5 L6 7.6" stroke="#b8e0c0" stroke-width="0.9"/><path d="M0.8 1 h1.5 M6.5 1h1.3" stroke="#4a8a60" stroke-width="1"/></svg>
<i class="t" style="left:40.19999999999999px;top:155.98px;width:115.8px;font-size:8px;line-height:10px;height:10px;color:#111;transform:scaleX(0.8522)">12.管割図（2）.SFC(011C0VSZ.SFC)</i>
<div class="a" style="left:25px;top:171px;width:4px;height:1px;background:#cfcfcf;"></div>
<svg class="a" style="left:29px;top:167px" width="9" height="9" viewBox="0 0 9 9"><rect x="0.3" y="0" width="8" height="8" fill="#14281e"/><path d="M0.3 5 h2 v3 h-2z M6 5h2.3v3H6z" fill="#2e8a78"/><circle cx="4.3" cy="2.3" r="1.4" fill="none" stroke="#d8f0d8" stroke-width="0.9"/><path d="M4.3 3.5 L2.6 7.6 M4.3 3.5 L6 7.6" stroke="#b8e0c0" stroke-width="0.9"/><path d="M0.8 1 h1.5 M6.5 1h1.3" stroke="#4a8a60" stroke-width="1"/></svg>
<i class="t" style="left:40.19999999999999px;top:166.95px;width:111.8px;font-size:8px;line-height:10px;height:10px;color:#111;transform:scaleX(0.8468)">13.切管調整図.SFC(012C0VSZ.SFC)</i>
<div class="a" style="left:25px;top:182px;width:4px;height:1px;background:#cfcfcf;"></div>
<svg class="a" style="left:29px;top:178px" width="9" height="9" viewBox="0 0 9 9"><rect x="0.3" y="0" width="8" height="8" fill="#14281e"/><path d="M0.3 5 h2 v3 h-2z M6 5h2.3v3H6z" fill="#2e8a78"/><circle cx="4.3" cy="2.3" r="1.4" fill="none" stroke="#d8f0d8" stroke-width="0.9"/><path d="M4.3 3.5 L2.6 7.6 M4.3 3.5 L6 7.6" stroke="#b8e0c0" stroke-width="0.9"/><path d="M0.8 1 h1.5 M6.5 1h1.3" stroke="#4a8a60" stroke-width="1"/></svg>
<i class="t" style="left:40.19999999999999px;top:177.92px;width:163.3px;font-size:8px;line-height:10px;height:10px;color:#111;transform:scaleX(0.8685)">14.管土工及び鋳鉄復旧断面図.SFC(013C0VSZ.SFC)</i>
<div class="a" style="left:25px;top:193px;width:4px;height:1px;background:#cfcfcf;"></div>
<svg class="a" style="left:29px;top:189px" width="9" height="9" viewBox="0 0 9 9"><rect x="0.3" y="0" width="8" height="8" fill="#14281e"/><path d="M0.3 5 h2 v3 h-2z M6 5h2.3v3H6z" fill="#2e8a78"/><circle cx="4.3" cy="2.3" r="1.4" fill="none" stroke="#d8f0d8" stroke-width="0.9"/><path d="M4.3 3.5 L2.6 7.6 M4.3 3.5 L6 7.6" stroke="#b8e0c0" stroke-width="0.9"/><path d="M0.8 1 h1.5 M6.5 1h1.3" stroke="#4a8a60" stroke-width="1"/></svg>
<i class="t" style="left:40.19999999999999px;top:188.89px;width:142.8px;font-size:8px;line-height:10px;height:10px;color:#111;transform:scaleX(0.7932)">15.防護コンクリート詳細図.SFC(014C0VSZ.SFC)</i>
<div class="a" style="left:25px;top:204px;width:4px;height:1px;background:#cfcfcf;"></div>
<svg class="a" style="left:29px;top:200px" width="9" height="9" viewBox="0 0 9 9"><rect x="0.3" y="0" width="8" height="8" fill="#14281e"/><path d="M0.3 5 h2 v3 h-2z M6 5h2.3v3H6z" fill="#2e8a78"/><circle cx="4.3" cy="2.3" r="1.4" fill="none" stroke="#d8f0d8" stroke-width="0.9"/><path d="M4.3 3.5 L2.6 7.6 M4.3 3.5 L6 7.6" stroke="#b8e0c0" stroke-width="0.9"/><path d="M0.8 1 h1.5 M6.5 1h1.3" stroke="#4a8a60" stroke-width="1"/></svg>
<i class="t" style="left:40.19999999999999px;top:199.86px;width:149.6px;font-size:8px;line-height:10px;height:10px;color:#111;transform:scaleX(0.8673)">16.NO4両発進立坑詳細図.SFC(015C0VSZ.SFC)</i>
<div class="a" style="left:25px;top:215px;width:4px;height:1px;background:#cfcfcf;"></div>
<svg class="a" style="left:29px;top:211px" width="9" height="9" viewBox="0 0 9 9"><rect x="0.3" y="0" width="8" height="8" fill="#14281e"/><path d="M0.3 5 h2 v3 h-2z M6 5h2.3v3H6z" fill="#2e8a78"/><circle cx="4.3" cy="2.3" r="1.4" fill="none" stroke="#d8f0d8" stroke-width="0.9"/><path d="M4.3 3.5 L2.6 7.6 M4.3 3.5 L6 7.6" stroke="#b8e0c0" stroke-width="0.9"/><path d="M0.8 1 h1.5 M6.5 1h1.3" stroke="#4a8a60" stroke-width="1"/></svg>
<i class="t" style="left:40.19999999999999px;top:210.83px;width:156.6px;font-size:8px;line-height:10px;height:10px;color:#111;transform:scaleX(0.8677)">17.NO5発進到達立坑詳細図.SFC(016C0VSZ.SFC)</i>
<div class="a" style="left:25px;top:226px;width:4px;height:1px;background:#cfcfcf;"></div>
<svg class="a" style="left:29px;top:222px" width="9" height="9" viewBox="0 0 9 9"><rect x="0.3" y="0" width="8" height="8" fill="#14281e"/><path d="M0.3 5 h2 v3 h-2z M6 5h2.3v3H6z" fill="#2e8a78"/><circle cx="4.3" cy="2.3" r="1.4" fill="none" stroke="#d8f0d8" stroke-width="0.9"/><path d="M4.3 3.5 L2.6 7.6 M4.3 3.5 L6 7.6" stroke="#b8e0c0" stroke-width="0.9"/><path d="M0.8 1 h1.5 M6.5 1h1.3" stroke="#4a8a60" stroke-width="1"/></svg>
<i class="t" style="left:40.19999999999999px;top:221.80px;width:126.4px;font-size:8px;line-height:10px;height:10px;color:#111;transform:scaleX(0.8539)">18.推進設備詳細図.SFC(017C0VSZ.SFC)</i>
<div class="a" style="left:25px;top:237px;width:4px;height:1px;background:#cfcfcf;"></div>
<svg class="a" style="left:29px;top:233px" width="9" height="9" viewBox="0 0 9 9"><rect x="0.3" y="0" width="8" height="8" fill="#14281e"/><path d="M0.3 5 h2 v3 h-2z M6 5h2.3v3H6z" fill="#2e8a78"/><circle cx="4.3" cy="2.3" r="1.4" fill="none" stroke="#d8f0d8" stroke-width="0.9"/><path d="M4.3 3.5 L2.6 7.6 M4.3 3.5 L6 7.6" stroke="#b8e0c0" stroke-width="0.9"/><path d="M0.8 1 h1.5 M6.5 1h1.3" stroke="#4a8a60" stroke-width="1"/></svg>
<i class="t" style="left:40.19999999999999px;top:232.77px;width:129.8px;font-size:8px;line-height:10px;height:10px;color:#111;transform:scaleX(0.8562)">19.復旧平面図（1）.SFC(018C0PLZ.SFC)</i>
<div class="a" style="left:25px;top:248px;width:4px;height:1px;background:#cfcfcf;"></div>
<svg class="a" style="left:29px;top:244px" width="9" height="9" viewBox="0 0 9 9"><rect x="0.3" y="0" width="8" height="8" fill="#14281e"/><path d="M0.3 5 h2 v3 h-2z M6 5h2.3v3H6z" fill="#2e8a78"/><circle cx="4.3" cy="2.3" r="1.4" fill="none" stroke="#d8f0d8" stroke-width="0.9"/><path d="M4.3 3.5 L2.6 7.6 M4.3 3.5 L6 7.6" stroke="#b8e0c0" stroke-width="0.9"/><path d="M0.8 1 h1.5 M6.5 1h1.3" stroke="#4a8a60" stroke-width="1"/></svg>
<i class="t" style="left:40.19999999999999px;top:243.74px;width:129.8px;font-size:8px;line-height:10px;height:10px;color:#111;transform:scaleX(0.8562)">20.復旧平面図（2）.SFC(019C0PLZ.SFC)</i>
<div class="a" style="left:25px;top:259px;width:4px;height:1px;background:#cfcfcf;"></div>
<svg class="a" style="left:29px;top:255px" width="9" height="9" viewBox="0 0 9 9"><rect x="0.3" y="0" width="8" height="8" fill="#14281e"/><path d="M0.3 5 h2 v3 h-2z M6 5h2.3v3H6z" fill="#2e8a78"/><circle cx="4.3" cy="2.3" r="1.4" fill="none" stroke="#d8f0d8" stroke-width="0.9"/><path d="M4.3 3.5 L2.6 7.6 M4.3 3.5 L6 7.6" stroke="#b8e0c0" stroke-width="0.9"/><path d="M0.8 1 h1.5 M6.5 1h1.3" stroke="#4a8a60" stroke-width="1"/></svg>
<i class="t" style="left:40.19999999999999px;top:254.71px;width:131.1px;font-size:8px;line-height:10px;height:10px;color:#111;transform:scaleX(0.8598)">21.復旧詳細図（1）.SFC(020C0VSZ.SFC)</i>
<div class="a" style="left:25px;top:270px;width:4px;height:1px;background:#cfcfcf;"></div>
<svg class="a" style="left:29px;top:266px" width="9" height="9" viewBox="0 0 9 9"><rect x="0.3" y="0" width="8" height="8" fill="#14281e"/><path d="M0.3 5 h2 v3 h-2z M6 5h2.3v3H6z" fill="#2e8a78"/><circle cx="4.3" cy="2.3" r="1.4" fill="none" stroke="#d8f0d8" stroke-width="0.9"/><path d="M4.3 3.5 L2.6 7.6 M4.3 3.5 L6 7.6" stroke="#b8e0c0" stroke-width="0.9"/><path d="M0.8 1 h1.5 M6.5 1h1.3" stroke="#4a8a60" stroke-width="1"/></svg>
<i class="t" style="left:40.19999999999999px;top:265.68px;width:131.1px;font-size:8px;line-height:10px;height:10px;color:#111;transform:scaleX(0.8598)">22.復旧詳細図（2）.SFC(021C0VSZ.SFC)</i>
<div class="a" style="left:25px;top:281px;width:4px;height:1px;background:#cfcfcf;"></div>
<svg class="a" style="left:29px;top:277px" width="9" height="9" viewBox="0 0 9 9"><rect x="0.3" y="0" width="8" height="8" fill="#14281e"/><path d="M0.3 5 h2 v3 h-2z M6 5h2.3v3H6z" fill="#2e8a78"/><circle cx="4.3" cy="2.3" r="1.4" fill="none" stroke="#d8f0d8" stroke-width="0.9"/><path d="M4.3 3.5 L2.6 7.6 M4.3 3.5 L6 7.6" stroke="#b8e0c0" stroke-width="0.9"/><path d="M0.8 1 h1.5 M6.5 1h1.3" stroke="#4a8a60" stroke-width="1"/></svg>
<i class="t" style="left:40.19999999999999px;top:276.65px;width:131.1px;font-size:8px;line-height:10px;height:10px;color:#111;transform:scaleX(0.8598)">23.復旧詳細図（3）.SFC(022C0VSZ.SFC)</i>
<div class="a" style="left:25px;top:292px;width:4px;height:1px;background:#cfcfcf;"></div>
<svg class="a" style="left:29px;top:288px" width="9" height="9" viewBox="0 0 9 9"><rect x="0.3" y="0" width="8" height="8" fill="#14281e"/><path d="M0.3 5 h2 v3 h-2z M6 5h2.3v3H6z" fill="#2e8a78"/><circle cx="4.3" cy="2.3" r="1.4" fill="none" stroke="#d8f0d8" stroke-width="0.9"/><path d="M4.3 3.5 L2.6 7.6 M4.3 3.5 L6 7.6" stroke="#b8e0c0" stroke-width="0.9"/><path d="M0.8 1 h1.5 M6.5 1h1.3" stroke="#4a8a60" stroke-width="1"/></svg>
<i class="t" style="left:40.19999999999999px;top:287.62px;width:131.1px;font-size:8px;line-height:10px;height:10px;color:#111;transform:scaleX(0.8598)">24.復旧詳細図（4）.SFC(023C0VSZ.SFC)</i>
<div class="a" style="left:25px;top:303px;width:4px;height:1px;background:#cfcfcf;"></div>
<svg class="a" style="left:29px;top:299px" width="9" height="9" viewBox="0 0 9 9"><rect x="0.3" y="0" width="8" height="8" fill="#14281e"/><path d="M0.3 5 h2 v3 h-2z M6 5h2.3v3H6z" fill="#2e8a78"/><circle cx="4.3" cy="2.3" r="1.4" fill="none" stroke="#d8f0d8" stroke-width="0.9"/><path d="M4.3 3.5 L2.6 7.6 M4.3 3.5 L6 7.6" stroke="#b8e0c0" stroke-width="0.9"/><path d="M0.8 1 h1.5 M6.5 1h1.3" stroke="#4a8a60" stroke-width="1"/></svg>
<i class="t" style="left:40.19999999999999px;top:298.59px;width:122.0px;font-size:8px;line-height:10px;height:10px;color:#111;transform:scaleX(0.8242)">25.吊防護工詳細図.SFC(024C0VSZ.SFC)</i>
<div class="a" style="left:25px;top:314px;width:4px;height:1px;background:#cfcfcf;"></div>
<svg class="a" style="left:29px;top:310px" width="9" height="9" viewBox="0 0 9 9"><rect x="0.3" y="0" width="8" height="8" fill="#14281e"/><path d="M0.3 5 h2 v3 h-2z M6 5h2.3v3H6z" fill="#2e8a78"/><circle cx="4.3" cy="2.3" r="1.4" fill="none" stroke="#d8f0d8" stroke-width="0.9"/><path d="M4.3 3.5 L2.6 7.6 M4.3 3.5 L6 7.6" stroke="#b8e0c0" stroke-width="0.9"/><path d="M0.8 1 h1.5 M6.5 1h1.3" stroke="#4a8a60" stroke-width="1"/></svg>
<i class="t" style="left:40.19999999999999px;top:309.56px;width:179.1px;font-size:8px;line-height:10px;height:10px;color:#111;transform:scaleX(0.8778)">26.試掘管土工及び鋳鉄復旧断面図.SFC(025C0VSZ.SFC)</i>
<div class="a" style="left:25px;top:325px;width:4px;height:1px;background:#cfcfcf;"></div>
<svg class="a" style="left:29px;top:321px" width="9" height="9" viewBox="0 0 9 9"><rect x="0.3" y="0" width="8" height="8" fill="#14281e"/><path d="M0.3 5 h2 v3 h-2z M6 5h2.3v3H6z" fill="#2e8a78"/><circle cx="4.3" cy="2.3" r="1.4" fill="none" stroke="#d8f0d8" stroke-width="0.9"/><path d="M4.3 3.5 L2.6 7.6 M4.3 3.5 L6 7.6" stroke="#b8e0c0" stroke-width="0.9"/><path d="M0.8 1 h1.5 M6.5 1h1.3" stroke="#4a8a60" stroke-width="1"/></svg>
<i class="t" style="left:40.19999999999999px;top:320.53px;width:124.8px;font-size:8px;line-height:10px;height:10px;color:#111;transform:scaleX(0.7998)">27.水質監視孔詳細図.SFC(026C0VSZ.SFC)</i>
<div class="a" style="left:25px;top:336px;width:4px;height:1px;background:#cfcfcf;"></div>
<svg class="a" style="left:29px;top:332px" width="9" height="9" viewBox="0 0 9 9"><rect x="0.3" y="0" width="8" height="8" fill="#14281e"/><path d="M0.3 5 h2 v3 h-2z M6 5h2.3v3H6z" fill="#2e8a78"/><circle cx="4.3" cy="2.3" r="1.4" fill="none" stroke="#d8f0d8" stroke-width="0.9"/><path d="M4.3 3.5 L2.6 7.6 M4.3 3.5 L6 7.6" stroke="#b8e0c0" stroke-width="0.9"/><path d="M0.8 1 h1.5 M6.5 1h1.3" stroke="#4a8a60" stroke-width="1"/></svg>
<i class="t" style="left:40.19999999999999px;top:331.50px;width:145.6px;font-size:8px;line-height:10px;height:10px;color:#111;transform:scaleX(0.8688)">28.家屋調査平面図（1）.SFC(027C0PLZ.SFC)</i>
<div class="a" style="left:25px;top:347px;width:4px;height:1px;background:#cfcfcf;"></div>
<svg class="a" style="left:29px;top:343px" width="9" height="9" viewBox="0 0 9 9"><rect x="0.3" y="0" width="8" height="8" fill="#14281e"/><path d="M0.3 5 h2 v3 h-2z M6 5h2.3v3H6z" fill="#2e8a78"/><circle cx="4.3" cy="2.3" r="1.4" fill="none" stroke="#d8f0d8" stroke-width="0.9"/><path d="M4.3 3.5 L2.6 7.6 M4.3 3.5 L6 7.6" stroke="#b8e0c0" stroke-width="0.9"/><path d="M0.8 1 h1.5 M6.5 1h1.3" stroke="#4a8a60" stroke-width="1"/></svg>
<i class="t" style="left:40.19999999999999px;top:342.47px;width:145.6px;font-size:8px;line-height:10px;height:10px;color:#111;transform:scaleX(0.8688)">29.家屋調査平面図（2）.SFC(028C0PLZ.SFC)</i>
<div class="a" style="left:25px;top:358px;width:4px;height:1px;background:#cfcfcf;"></div>
<svg class="a" style="left:29px;top:354px" width="9" height="9" viewBox="0 0 9 9"><rect x="0.3" y="0" width="8" height="8" fill="#14281e"/><path d="M0.3 5 h2 v3 h-2z M6 5h2.3v3H6z" fill="#2e8a78"/><circle cx="4.3" cy="2.3" r="1.4" fill="none" stroke="#d8f0d8" stroke-width="0.9"/><path d="M4.3 3.5 L2.6 7.6 M4.3 3.5 L6 7.6" stroke="#b8e0c0" stroke-width="0.9"/><path d="M0.8 1 h1.5 M6.5 1h1.3" stroke="#4a8a60" stroke-width="1"/></svg>
<i class="t" style="left:40.19999999999999px;top:353.44px;width:151.4px;font-size:8px;line-height:10px;height:10px;color:#111;transform:scaleX(0.8246)">30.水道マーカー平面図（1）.SFC(029C0PLZ.SFC)</i>
<div class="a" style="left:25px;top:369px;width:4px;height:1px;background:#cfcfcf;"></div>
<svg class="a" style="left:29px;top:365px" width="9" height="9" viewBox="0 0 9 9"><rect x="0.3" y="0" width="8" height="8" fill="#14281e"/><path d="M0.3 5 h2 v3 h-2z M6 5h2.3v3H6z" fill="#2e8a78"/><circle cx="4.3" cy="2.3" r="1.4" fill="none" stroke="#d8f0d8" stroke-width="0.9"/><path d="M4.3 3.5 L2.6 7.6 M4.3 3.5 L6 7.6" stroke="#b8e0c0" stroke-width="0.9"/><path d="M0.8 1 h1.5 M6.5 1h1.3" stroke="#4a8a60" stroke-width="1"/></svg>
<i class="t" style="left:40.19999999999999px;top:364.41px;width:151.4px;font-size:8px;line-height:10px;height:10px;color:#111;transform:scaleX(0.8246)">31.水道マーカー平面図（2）.SFC(030C0PLZ.SFC)</i>
<div class="a" style="left:25px;top:379px;width:4px;height:1px;background:#cfcfcf;"></div>
<svg class="a" style="left:29px;top:375px" width="9" height="9" viewBox="0 0 9 9"><rect x="0.3" y="0" width="8" height="8" fill="#14281e"/><path d="M0.3 5 h2 v3 h-2z M6 5h2.3v3H6z" fill="#2e8a78"/><circle cx="4.3" cy="2.3" r="1.4" fill="none" stroke="#d8f0d8" stroke-width="0.9"/><path d="M4.3 3.5 L2.6 7.6 M4.3 3.5 L6 7.6" stroke="#b8e0c0" stroke-width="0.9"/><path d="M0.8 1 h1.5 M6.5 1h1.3" stroke="#4a8a60" stroke-width="1"/></svg>
<i class="t" style="left:40.19999999999999px;top:375.38px;width:145.6px;font-size:8px;line-height:10px;height:10px;color:#111;transform:scaleX(0.8688)">32.仮設道路平面図（1）.SFC(031C0PLZ.SFC)</i>
</div>
<div class="a" style="left:475px;top:113px;width:485px;height:385px;background:#f3f4f6;"></div>
<div class="a" style="left:960px;top:113px;width:1px;height:385px;background:#8e8e8e;"></div>
<div class="a" style="left:961px;top:113px;width:3px;height:387px;background:#fafafa;"></div>
<div class="a" style="left:476px;top:113px;width:334px;height:14px;background:#ededed;"></div>
<div class="a" style="left:476px;top:126px;width:334px;height:1px;background:#c4c4c4;"></div>
<div class="a" style="left:499.0px;top:113px;width:1px;height:113px;background:#d4d4d4;"></div>
<div class="a" style="left:567.0px;top:113px;width:1px;height:113px;background:#d4d4d4;"></div>
<div class="a" style="left:635.0px;top:113px;width:1px;height:113px;background:#d4d4d4;"></div>
<div class="a" style="left:809.5px;top:113px;width:1px;height:113px;background:#d4d4d4;"></div>
<div class="a" style="left:476px;top:113px;width:334px;height:1px;background:#f8f8f8;"></div>
<i class="t" style="left:480.4px;top:115.55px;width:14.1px;font-size:8.5px;line-height:10.5px;height:10.5px;color:#111;transform:scaleX(0.7833)">番号</i>
<i class="t" style="left:520.8px;top:115.55px;width:27.2px;font-size:8.5px;line-height:10.5px;height:10.5px;color:#111;transform:scaleX(0.6044)">カテゴリー</i>
<i class="t" style="left:591.6px;top:115.55px;width:21.8px;font-size:8.5px;line-height:10.5px;height:10.5px;color:#111;transform:scaleX(0.8074)">項目名</i>
<i class="t" style="left:707.8px;top:115.55px;width:30.9px;font-size:8.5px;line-height:10.5px;height:10.5px;color:#111;transform:scaleX(0.8583)">設定項目</i>
<div class="a" style="left:476px;top:127px;width:23.5px;height:14px;background:#efefef;"></div>
<div class="a" style="left:476px;top:140px;width:23.5px;height:1px;background:#c8c8c8;"></div>
<div class="a" style="left:500px;top:127px;width:67.5px;height:14px;background:#dcfcff;"></div>
<div class="a" style="left:568px;top:127px;width:67.5px;height:14px;background:#ffffff;"></div>
<div class="a" style="left:636px;top:127px;width:174px;height:14px;background:#ffffff;"></div>
<div class="a" style="left:500px;top:140px;width:310px;height:1px;background:#dcdcdc;"></div>
<i class="t" style="left:485px;top:129.85px;width:5.5px;font-size:8.5px;line-height:10.5px;height:10.5px;color:#222;font-weight:400;transform:scaleX(1.1617)">1</i>
<i class="t" style="left:501.5px;top:129.25px;width:30.0px;font-size:8.5px;line-height:10.5px;height:10.5px;color:#2d4bb0;transform:scaleX(0.8333)">共通情報</i>
<i class="t" style="left:569.3px;top:129.75px;width:44.2px;font-size:8.5px;line-height:10.5px;height:10.5px;color:#3038a0;transform:scaleX(0.8185)">適用要領基準</i>
<i class="t" style="left:637.8px;top:129.25px;width:51.9px;font-size:8.5px;line-height:10.5px;height:10.5px;color:#111;transform:scaleX(0.8848)">土木201703-01</i>
<div class="a" style="left:476px;top:141px;width:23.5px;height:14px;background:#efefef;"></div>
<div class="a" style="left:476px;top:154px;width:23.5px;height:1px;background:#c8c8c8;"></div>
<div class="a" style="left:500px;top:141px;width:67.5px;height:14px;background:#dcfcff;"></div>
<div class="a" style="left:568px;top:141px;width:67.5px;height:14px;background:#fffdd0;"></div>
<div class="a" style="left:636px;top:141px;width:174px;height:14px;background:#ffffff;"></div>
<div class="a" style="left:500px;top:154px;width:310px;height:1px;background:#dcdcdc;"></div>
<i class="t" style="left:485px;top:143.85px;width:5.5px;font-size:8.5px;line-height:10.5px;height:10.5px;color:#222;font-weight:400;transform:scaleX(1.1617)">2</i>
<i class="t" style="left:569.3px;top:143.75px;width:47.9px;font-size:8.5px;line-height:10.5px;height:10.5px;color:#333;transform:scaleX(0.8427)">対象工種-数値</i>
<i class="t" style="left:637.8px;top:141.25px;width:13.8px;font-size:8.5px;line-height:10.5px;height:10.5px;color:#111;transform:scaleX(0.9727)">034</i>
<div class="a" style="left:476px;top:155px;width:23.5px;height:14px;background:#efefef;"></div>
<div class="a" style="left:476px;top:168px;width:23.5px;height:1px;background:#c8c8c8;"></div>
<div class="a" style="left:500px;top:155px;width:67.5px;height:14px;background:#dcfcff;"></div>
<div class="a" style="left:568px;top:155px;width:67.5px;height:14px;background:#dcfcff;"></div>
<div class="a" style="left:636px;top:155px;width:174px;height:14px;background:#ffffff;"></div>
<div class="a" style="left:500px;top:168px;width:310px;height:1px;background:#dcdcdc;"></div>
<i class="t" style="left:485px;top:157.85px;width:5.5px;font-size:8.5px;line-height:10.5px;height:10.5px;color:#222;font-weight:400;transform:scaleX(1.1617)">3</i>
<i class="t" style="left:501.5px;top:157.25px;width:30.0px;font-size:8.5px;line-height:10.5px;height:10.5px;color:#2d4bb0;transform:scaleX(0.8333)">追加工種</i>
<i class="t" style="left:569.3px;top:157.75px;width:62.9px;font-size:8.5px;line-height:10.5px;height:10.5px;color:#2f50b0;transform:scaleX(0.8404)">追加対象工種-数値</i>
<div class="a" style="left:476px;top:169px;width:23.5px;height:14px;background:#efefef;"></div>
<div class="a" style="left:476px;top:182px;width:23.5px;height:1px;background:#c8c8c8;"></div>
<div class="a" style="left:500px;top:169px;width:67.5px;height:14px;background:#dcfcff;"></div>
<div class="a" style="left:568px;top:169px;width:67.5px;height:14px;background:#dcfcff;"></div>
<div class="a" style="left:636px;top:169px;width:174px;height:14px;background:#ffffff;"></div>
<div class="a" style="left:500px;top:182px;width:310px;height:1px;background:#dcdcdc;"></div>
<i class="t" style="left:485px;top:171.85px;width:5.5px;font-size:8.5px;line-height:10.5px;height:10.5px;color:#222;font-weight:400;transform:scaleX(1.1617)">4</i>
<i class="t" style="left:569.3px;top:171.75px;width:62.2px;font-size:8.5px;line-height:10.5px;height:10.5px;color:#2f50b0;transform:scaleX(0.8311)">追加対象工種-概要</i>
<div class="a" style="left:476px;top:183px;width:23.5px;height:14px;background:#efefef;"></div>
<div class="a" style="left:476px;top:196px;width:23.5px;height:1px;background:#c8c8c8;"></div>
<div class="a" style="left:500px;top:183px;width:67.5px;height:14px;background:#dcfcff;"></div>
<div class="a" style="left:568px;top:183px;width:67.5px;height:14px;background:#ffffff;"></div>
<div class="a" style="left:636px;top:183px;width:174px;height:14px;background:#ffffff;"></div>
<div class="a" style="left:500px;top:196px;width:310px;height:1px;background:#dcdcdc;"></div>
<i class="t" style="left:485px;top:185.85px;width:5.5px;font-size:8.5px;line-height:10.5px;height:10.5px;color:#222;font-weight:400;transform:scaleX(1.1617)">5</i>
<i class="t" style="left:501.7px;top:185.25px;width:32.7px;font-size:8.5px;line-height:10.5px;height:10.5px;color:#2a3a8a;transform:scaleX(0.6056)">サブフォルダ</i>
<i class="t" style="left:569.3px;top:185.75px;width:62.2px;font-size:8.5px;line-height:10.5px;height:10.5px;color:#3a3a9a;transform:scaleX(0.6911)">追加サブフォルダ名称</i>
<i class="t" style="left:637.8px;top:183.25px;width:24.6px;font-size:8.5px;line-height:10.5px;height:10.5px;color:#111;transform:scaleX(0.8269)">OTHRS</i>
<div class="a" style="left:476px;top:197px;width:23.5px;height:14px;background:#efefef;"></div>
<div class="a" style="left:476px;top:210px;width:23.5px;height:1px;background:#c8c8c8;"></div>
<div class="a" style="left:500px;top:197px;width:67.5px;height:14px;background:#dcfcff;"></div>
<div class="a" style="left:568px;top:197px;width:67.5px;height:14px;background:#dcfcff;"></div>
<div class="a" style="left:636px;top:197px;width:174px;height:14px;background:#ffffff;"></div>
<div class="a" style="left:500px;top:210px;width:310px;height:1px;background:#dcdcdc;"></div>
<i class="t" style="left:485px;top:199.85px;width:5.5px;font-size:8.5px;line-height:10.5px;height:10.5px;color:#222;font-weight:400;transform:scaleX(1.1617)">6</i>
<i class="t" style="left:569.3px;top:199.75px;width:61.7px;font-size:8.5px;line-height:10.5px;height:10.5px;color:#2f50b0;transform:scaleX(0.7004)">追加サブフォルダ名...</i>
<i class="t" style="left:637.8px;top:197.25px;width:70.0px;font-size:8.5px;line-height:10.5px;height:10.5px;color:#111;transform:scaleX(0.6481)">完成図オリジナルファイル</i>
<div class="a" style="left:476px;top:211px;width:23.5px;height:14px;background:#efefef;"></div>
<div class="a" style="left:476px;top:224px;width:23.5px;height:1px;background:#c8c8c8;"></div>
<div class="a" style="left:500px;top:211px;width:67.5px;height:14px;background:#dcfcff;"></div>
<div class="a" style="left:568px;top:211px;width:67.5px;height:14px;background:#e4fde4;"></div>
<div class="a" style="left:636px;top:211px;width:174px;height:14px;background:#ffffff;"></div>
<div class="a" style="left:500px;top:224px;width:310px;height:1px;background:#dcdcdc;"></div>
<i class="t" style="left:485px;top:213.85px;width:5.5px;font-size:8.5px;line-height:10.5px;height:10.5px;color:#222;font-weight:400;transform:scaleX(1.1617)">7</i>
<i class="t" style="left:569.3px;top:213.75px;width:54.7px;font-size:8.5px;line-height:10.5px;height:10.5px;color:#333;transform:scaleX(0.6851)">ソフトメーカ用TAG</i>
<div class="a" style="left:499.0px;top:127px;width:1px;height:98px;background:#d0d0d0;"></div>
<div class="a" style="left:567.0px;top:127px;width:1px;height:98px;background:#d0d0d0;"></div>
<div class="a" style="left:635.0px;top:127px;width:1px;height:98px;background:#d0d0d0;"></div>
<div class="a" style="left:809.5px;top:127px;width:1px;height:98px;background:#d0d0d0;"></div>
<div class="a" style="left:476px;top:225px;width:334px;height:1px;background:#e4e4e4;"></div>
<div class="a" style="left:0px;top:497px;width:964px;height:1px;background:#a0a0a0;"></div>
<div class="a" style="left:0px;top:498px;width:964px;height:2px;background:#f4f4f4;"></div>
<div class="a" style="left:0px;top:500px;width:964px;height:2px;background:#a8a8a8;"></div>
<div class="a" style="left:0px;top:502px;width:964px;height:8px;background:#ffffff;"></div>
<div class="clip" style="left:0;top:502px;width:200px;height:8px">
<i class="t" style="left:0px;top:1.50px;width:38.0px;font-size:9px;line-height:11px;height:11px;color:#555;transform:scaleX(0.6032)">印刷プレビュー</i>
</div>
<div class="a" style="left:0px;top:510px;width:964px;height:26px;background:linear-gradient(90deg,#202228 0%,#1d2230 30%,#1a2438 60%,#172440 100%);"></div>
<div class="a" style="left:960px;top:510px;width:4px;height:26px;background:#22252b;"></div>
<svg class="a" style="left:11px;top:515px" width="18" height="18" viewBox="0 0 18 18"><path d="M9 2.5 L16.5 16 L1.5 16 Z" fill="#f2c531" stroke="#f2c531" stroke-width="1.6" stroke-linejoin="round"/><path d="M6.5 11.5h5M6.5 13.5h4" stroke="#8a6a10" stroke-width="1"/></svg>
<svg class="a" style="left:20px;top:514px" width="10" height="10" viewBox="0 0 10 10"><circle cx="5" cy="5" r="4.6" fill="#d93a2b"/><text x="5" y="8" font-size="7.5" text-anchor="middle" fill="#fff" font-family="Liberation Sans">8</text></svg>
<i class="t" style="left:32px;top:514.30px;width:37.0px;font-size:9px;line-height:11px;height:11px;color:#e8e8e8;transform:scaleX(0.8222)">波浪注意報</i>
<i class="t" style="left:32px;top:523.90px;width:22.0px;font-size:9px;line-height:11px;height:11px;color:#d0d0d0;transform:scaleX(0.8148)">発令中</i>
<svg class="a" style="left:235px;top:517px" width="16" height="16" viewBox="0 0 16 16"><rect x="0" y="0" width="7.3" height="7.3" fill="#4cc2f1"/><rect x="8.3" y="0" width="7.3" height="7.3" fill="#3bb3ee"/><rect x="0" y="8.3" width="7.3" height="7.3" fill="#2ea6ea"/><rect x="8.3" y="8.3" width="7.3" height="7.3" fill="#1e90e0"/></svg>
<div class="a" style="left:259px;top:515px;width:136px;height:19px;border-radius:10px;background:#f3f3f3"></div>
<svg class="a" style="left:265px;top:520px" width="10" height="10" viewBox="0 0 10 10"><circle cx="4" cy="4" r="3" fill="none" stroke="#333" stroke-width="1.3"/><path d="M6.2 6.2 L9 9" stroke="#333" stroke-width="1.4"/></svg>
<i class="t" style="left:281px;top:519.50px;width:18.0px;font-size:9px;line-height:11px;height:11px;color:#777;transform:scaleX(1)">検索</i>
<svg class="a" style="left:360px;top:515px" width="36" height="19" viewBox="0 0 36 19"><path d="M3 7 L16 17" stroke="#6a5a4a" stroke-width="1"/><ellipse cx="7" cy="5" rx="1.4" ry="3" transform="rotate(30 7 5)" fill="#4a9a70"/><ellipse cx="9.5" cy="8" rx="1" ry="2.2" transform="rotate(-20 9.5 8)" fill="#6ab890"/><circle cx="4.5" cy="13" r="1.5" fill="#d04058"/><circle cx="9" cy="16.5" r="1.3" fill="#c83850"/><circle cx="12.5" cy="11" r="1.9" fill="#d84860"/><circle cx="15.5" cy="10.5" r="1.8" fill="#d84058"/><ellipse cx="20" cy="8" rx="3.2" ry="3" fill="#e09434"/><path d="M21 5 L23 3.5 L22.5 6z" fill="#b87020"/><path d="M20 10 Q23 17 29 17 Q34 15 32 8 Q31 2 27.5 3 Q25.5 7 27.5 11 Q25 12 22.5 9Z" fill="#d98a2e"/></svg>
<svg class="a" style="left:403px;top:517px" width="16" height="14" viewBox="0 0 16 14"><rect x="4" y="0" width="11" height="9" fill="#e0e0e0"/><rect x="0" y="4" width="11" height="9" fill="#8a8a8a"/></svg>
<svg class="a" style="left:432px;top:516px" width="12" height="16" viewBox="0 0 12 16"><rect x="0" y="0" width="11" height="15" rx="1" fill="#8aa0b0"/><rect x="1.5" y="1.5" width="8" height="3" fill="#cde"/><path d="M2 7h2M5 7h2M8 7h1.5M2 9.5h2M5 9.5h2M8 9.5h1.5M2 12h2M5 12h2M8 12h1.5" stroke="#e8f0f5" stroke-width="1.3"/></svg>
<svg class="a" style="left:459px;top:517px" width="15" height="15" viewBox="0 0 15 15"><path d="M3 2 Q7 0 9 3 L7 10 Q5 14 2 12 Q0 10 1 7 Z" fill="#3a8ef0"/><path d="M12 13 Q8 15 6 12 L8 5 Q10 1 13 3 Q15 5 14 8 Z" fill="#f08a30"/><path d="M4 4 L10 4 L8 10 L5 10Z" fill="#a050e0"/></svg>
<svg class="a" style="left:486px;top:516px" width="16" height="16" viewBox="0 0 16 16"><circle cx="11" cy="4" r="2.3" fill="#7b83eb"/><path d="M8 7 h7 v5 q-3.5 3 -7 0z" fill="#7b83eb"/><circle cx="7.5" cy="3.5" r="2.6" fill="#5059c9"/><rect x="1" y="5" width="9" height="9" rx="1" fill="#4b53bc"/><path d="M3 7.5h5M5.5 7.5v5" stroke="#fff" stroke-width="1.3"/></svg>
<svg class="a" style="left:513px;top:516px" width="16" height="16" viewBox="0 0 16 16"><circle cx="8" cy="8" r="7.3" fill="#1b9de2"/><path d="M2 9 Q3 3 9 3 Q14 3 14.5 8 Q14 11 10 11 Q6.5 11 6.5 9 Q6.5 7 9 7" stroke="#3fd07f" stroke-width="2" fill="none"/><path d="M2 9 Q4 15 10 14.5" stroke="#0c59a4" stroke-width="2" fill="none"/></svg>
<svg class="a" style="left:540px;top:517px" width="17" height="14" viewBox="0 0 17 14"><path d="M0.5 1 h6 l2 2 h8 v10.5 h-16z" fill="#f9c73c"/><rect x="0.5" y="4" width="16" height="9.5" fill="#ffd75a"/><rect x="4" y="9" width="9" height="3" fill="#2c8be0"/></svg>
<svg class="a" style="left:569px;top:516px" width="15" height="16" viewBox="0 0 15 16"><path d="M2 6 L9 2 L14 5 L14 13 L2 13 Z" fill="#2d8be6"/><path d="M2 6 L8 10 L14 6" stroke="#9fd0ff" stroke-width="1" fill="none"/><rect x="0" y="7" width="6" height="6" rx="1" fill="#0e5cb5"/><circle cx="3" cy="10" r="1.5" fill="none" stroke="#fff" stroke-width="0.9"/></svg>
<svg class="a" style="left:595px;top:517px" width="17" height="16" viewBox="0 0 17 16"><rect x="3" y="0" width="13" height="10" fill="#5a5a5a"/><circle cx="4.5" cy="10" r="4" fill="#36c2d0"/><path d="M2.5 10h4M4.5 8v4" stroke="#fff" stroke-width="1.1"/><path d="M7 13 L9 15" stroke="#36c2d0" stroke-width="1.6"/></svg>
<svg class="a" style="left:623px;top:516px" width="16" height="16" viewBox="0 0 16 16"><path d="M4 4 Q4 0.5 8 0.5 Q12 0.5 12 4" stroke="#3a8af0" stroke-width="1.2" fill="none"/><rect x="0.5" y="3.5" width="15" height="12" rx="2" fill="#f5f5f5"/><rect x="5" y="6.5" width="2.8" height="2.8" fill="#f25022"/><rect x="8.3" y="6.5" width="2.8" height="2.8" fill="#7fba00"/><rect x="5" y="9.8" width="2.8" height="2.8" fill="#00a4ef"/><rect x="8.3" y="9.8" width="2.8" height="2.8" fill="#ffb900"/></svg>
<svg class="a" style="left:651px;top:516px" width="16" height="16" viewBox="0 0 16 16"><rect x="0" y="0" width="15.5" height="15.5" rx="1.5" fill="#8bc34a"/><path d="M7 3 v9 M4 12 h8 M7 6 h4" stroke="#fff" stroke-width="2"/><rect x="10" y="12" width="5" height="3" fill="#f7c948"/></svg>
<svg class="a" style="left:677px;top:516px" width="17" height="16" viewBox="0 0 17 16"><rect x="5" y="1" width="11" height="14" rx="1" fill="#2b7cd3"/><path d="M5 5h11M5 9h11" stroke="#41a5ee" stroke-width="1.5"/><rect x="0" y="4" width="9" height="9" rx="1" fill="#185abd"/><text x="4.5" y="11" font-size="7" text-anchor="middle" fill="#fff" font-weight="bold" font-family="Liberation Sans">W</text></svg>
<div class="a" style="left:701px;top:512px;width:25px;height:24px;background:#222c44;border-radius:3px"></div>
<svg class="a" style="left:706px;top:517px" width="16" height="16" viewBox="0 0 16 16"><rect x="0" y="0" width="15" height="15" rx="1.5" fill="#86c850"/><path d="M6 0 h7.5 q1.5 0 1.5 1.5 v7z" fill="#f0d040"/><circle cx="6.5" cy="8.5" r="5" fill="#6a6a6a"/><circle cx="4" cy="6.5" r="1.2" fill="#eee"/><circle cx="8.5" cy="11" r="1.2" fill="#eee"/><circle cx="6.5" cy="8.5" r="1.6" fill="#bbb"/></svg>
<div class="a" style="left:709px;top:534.5px;width:9px;height:1.5px;background:#70c8f0;border-radius:1px"></div>
<div class="a" style="left:657px;top:534.5px;width:3px;height:1.5px;background:#9aa0a8;border-radius:1px"></div>
<div class="a" style="left:684px;top:534.5px;width:3px;height:1.5px;background:#9aa0a8;border-radius:1px"></div>
<svg class="a" style="left:768px;top:520px" width="10" height="7" viewBox="0 0 10 7"><path d="M1 5.5 L5 1.5 L9 5.5" stroke="#fff" stroke-width="1.2" fill="none"/></svg>
<svg class="a" style="left:786px;top:518px" width="13" height="14" viewBox="0 0 13 14"><path d="M2 6 A5 5 0 0 1 10 3 M11 8 A5 5 0 0 1 3 11" stroke="#ddd" stroke-width="1.3" fill="none"/><path d="M10 0.5 L10.5 4 L7 3.5Z M3 13.5 L2.5 10 L6 10.5Z" fill="#ddd"/><circle cx="10" cy="11" r="2.3" fill="#1e90ff"/></svg>
<i class="t" style="left:807.5px;top:517.30px;width:9.5px;font-size:13px;line-height:15px;height:15px;color:#e8e8e8;font-weight:400;transform:scaleX(1.0955)">A</i>
<svg class="a" style="left:827px;top:521px" width="9" height="8" viewBox="0 0 9 8"><path d="M0.8 3 Q4.5 -0.5 8.2 3 M2.2 4.6 Q4.5 2.5 6.8 4.6" stroke="#e8e8e8" stroke-width="1" fill="none"/><circle cx="4.5" cy="6.5" r="0.9" fill="#e8e8e8"/></svg>
<svg class="a" style="left:844px;top:520px" width="10" height="10" viewBox="0 0 10 10"><path d="M1 3.5h2l3-2.5v8l-3-2.5h-2z" stroke="#e8e8e8" stroke-width="0.9" fill="none"/><path d="M7.5 3 Q9 5 7.5 7" stroke="#888" stroke-width="0.8" fill="none"/></svg>
<svg class="a" style="left:857px;top:519px" width="14" height="11" viewBox="0 0 14 11"><rect x="0.5" y="3" width="11.5" height="6.5" rx="1.5" fill="#8bc34a" stroke="#cfe8b0" stroke-width="0.6"/><rect x="12" y="5" width="1.5" height="3" fill="#cfe8b0"/><path d="M5.5 0 L4.2 5 H6.5 L5.2 9" stroke="#fff" stroke-width="1" fill="none"/></svg>
<i class="t" style="left:872px;top:519.00px;width:15.0px;font-size:9px;line-height:11px;height:11px;color:#e8e8e8;font-weight:400;transform:scaleX(0.8326)">96%</i>
<i class="t" style="left:915px;top:513.50px;width:18.0px;font-size:9px;line-height:11px;height:11px;color:#e8e8e8;font-weight:400;transform:scaleX(0.7989)">23:33</i>
<i class="t" style="left:894px;top:524.10px;width:38.0px;font-size:9px;line-height:11px;height:11px;color:#e8e8e8;font-weight:400;transform:scaleX(0.8436)">2026/01/21</i>
<svg class="a" style="left:937px;top:519px" width="11" height="12" viewBox="0 0 11 12"><path d="M5.5 1.5 Q9 1.5 9 5.5 L9 8.5 L10.5 10 L0.5 10 L2 8.5 L2 5.5 Q2 1.5 5.5 1.5Z" fill="none" stroke="#e8e8e8" stroke-width="1"/><path d="M4 11 Q5.5 12.5 7 11" stroke="#e8e8e8" stroke-width="1" fill="none"/></svg>
<script>
(function(){var els=document.querySelectorAll('.t');for(var i=0;i<els.length;i++){var e=els[i];var w=parseFloat(e.style.width);if(!w)continue;e.style.transform='none';e.style.width='auto';var nw=e.getBoundingClientRect().width;e.style.width=w+'px';if(nw>0){e.style.transform='scaleX('+(w/nw).toFixed(4)+')';}}})();
</script>
</body></html>
